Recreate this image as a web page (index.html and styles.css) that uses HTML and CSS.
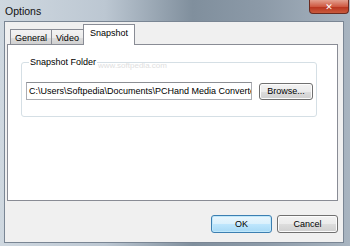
FILE: index.html
```html
<!doctype html>
<html>

<head>
  <meta charset="UTF-8">
  <title>Options</title>
  <link rel="stylesheet" href="styles.css">
</head>

<body>
  <div class="window">
    <div class="titlebar">
      <span class="title">Options</span>
      <span class="close">&#x2715;</span>
    </div>

    <div class="client">
      <div class="tabs">
        <div class="tab">General</div>
        <div class="tab">Video</div>
        <div class="tab active">Snapshot</div>
      </div>

      <div class="panel">
        <fieldset class="group">
          <legend>Snapshot Folder</legend>
          <div class="row">
            <div class="path">C:\Users\Softpedia\Documents\PCHand Media Converter</div>
            <button class="btn browse">Browse...</button>
          </div>
        </fieldset>
        <span class="mark">www.softpedia.com</span>
      </div>

      <div class="actions">
        <button class="btn default">OK</button>
        <button class="btn">Cancel</button>
      </div>
    </div>
  </div>
</body>

</html>
```

FILE: styles.css
```css
body {
  margin: 0;
  font: normal 9px/1.2 "Liberation Sans", Arial, sans-serif;
  color: #000;
}

.window {
  width: 350px;
  height: 246px;
  display: flex;
  flex-direction: column;
  background: linear-gradient(90deg, #cfd8e0 0%, #bcc7d2 30%, #808f9d 55%, #8c9aa8 75%, #a8b4c0 100%);
}

.titlebar {
  height: 21px;
  display: flex;
  align-items: flex-start;
  justify-content: space-between;
}

.title {
  font-size: 10.5px;
  padding: 5px 0 0 5px;
  color: #111;
}

.close {
  width: 40px;
  height: 14px;
  margin-right: 1px;
  border: 1px solid #6b2b20;
  border-top: none;
  border-radius: 0 0 4px 4px;
  background: linear-gradient(#e3a08f, #cf5a43 50%, #b8321d 51%, #c95a3c);
  color: #fff;
  font: bold 9px/14px "DejaVu Sans", sans-serif;
  text-align: center;
  box-sizing: border-box;
}

.client {
  flex: 1;
  margin: 0 6px 3px 4px;
  border: 1px solid #7a8694;
  background: #f0f0f0;
  padding: 3px 5px 0 2px;
  display: flex;
  flex-direction: column;
}

.tabs {
  display: flex;
  align-items: flex-end;
  padding-left: 3px;
  height: 20px;
  margin-bottom: -1px;
}

.tab {
  height: 16px;
  padding: 0 4px;
  border: 1px solid #898c95;
  border-bottom: none;
  margin-right: -1px;
  background: linear-gradient(#f3f3f3, #ebebeb 50%, #dddddd 51%, #cfcfcf);
  line-height: 16px;
  box-sizing: border-box;
}

.tab.active {
  height: 21px;
  padding: 0 6px;
  background: #fff;
  position: relative;
  z-index: 1;
  line-height: 17px;
}

.panel {
  height: 157px;
  border: 1px solid #898c95;
  background: #fff;
  box-sizing: border-box;
  padding: 12px 20px 0 13px;
  position: relative;
}

.group {
  margin: 0;
  min-width: 0;
  height: 60px;
  border: 1px solid #d5dfe5;
  border-radius: 3px;
  padding: 14px 3px 0 4px;
  box-sizing: border-box;
}

.group legend {
  padding: 0 1px;
  margin-left: 3px;
}

.row {
  display: flex;
  gap: 7px;
}

.path {
  flex: 1;
  min-width: 0;
  height: 18px;
  border: 1px solid #abadb3;
  border-top-color: #8c8f94;
  padding: 0 2px;
  line-height: 16px;
  box-sizing: border-box;
  white-space: nowrap;
  overflow: hidden;
}

.btn {
  font: inherit;
  color: #000;
  height: 18px;
  padding: 0;
  border: 1px solid #707070;
  border-radius: 3px;
  background: linear-gradient(#f2f2f2, #ebebeb 50%, #dddddd 51%, #cfcfcf);
  box-shadow: inset 0 0 0 1px #fcfcfc;
}

.browse {
  width: 54px;
  flex: none;
  margin-top: 1px;
  height: 17px;
}

.mark {
  position: absolute;
  left: 90px;
  top: 16px;
  color: #e0e0e0;
  font-size: 8px;
}

.actions {
  display: flex;
  justify-content: flex-end;
  gap: 5px;
  padding: 14px 0 0;
}

.actions .btn {
  width: 61px;
}

.btn.default {
  border-color: #3c7fb1;
  background: linear-gradient(#eaf6fd, #d9f0fc 50%, #bee6fd 51%, #a7d9f5);
  box-shadow: inset 0 0 0 1px #c0e8fb;
}
```
